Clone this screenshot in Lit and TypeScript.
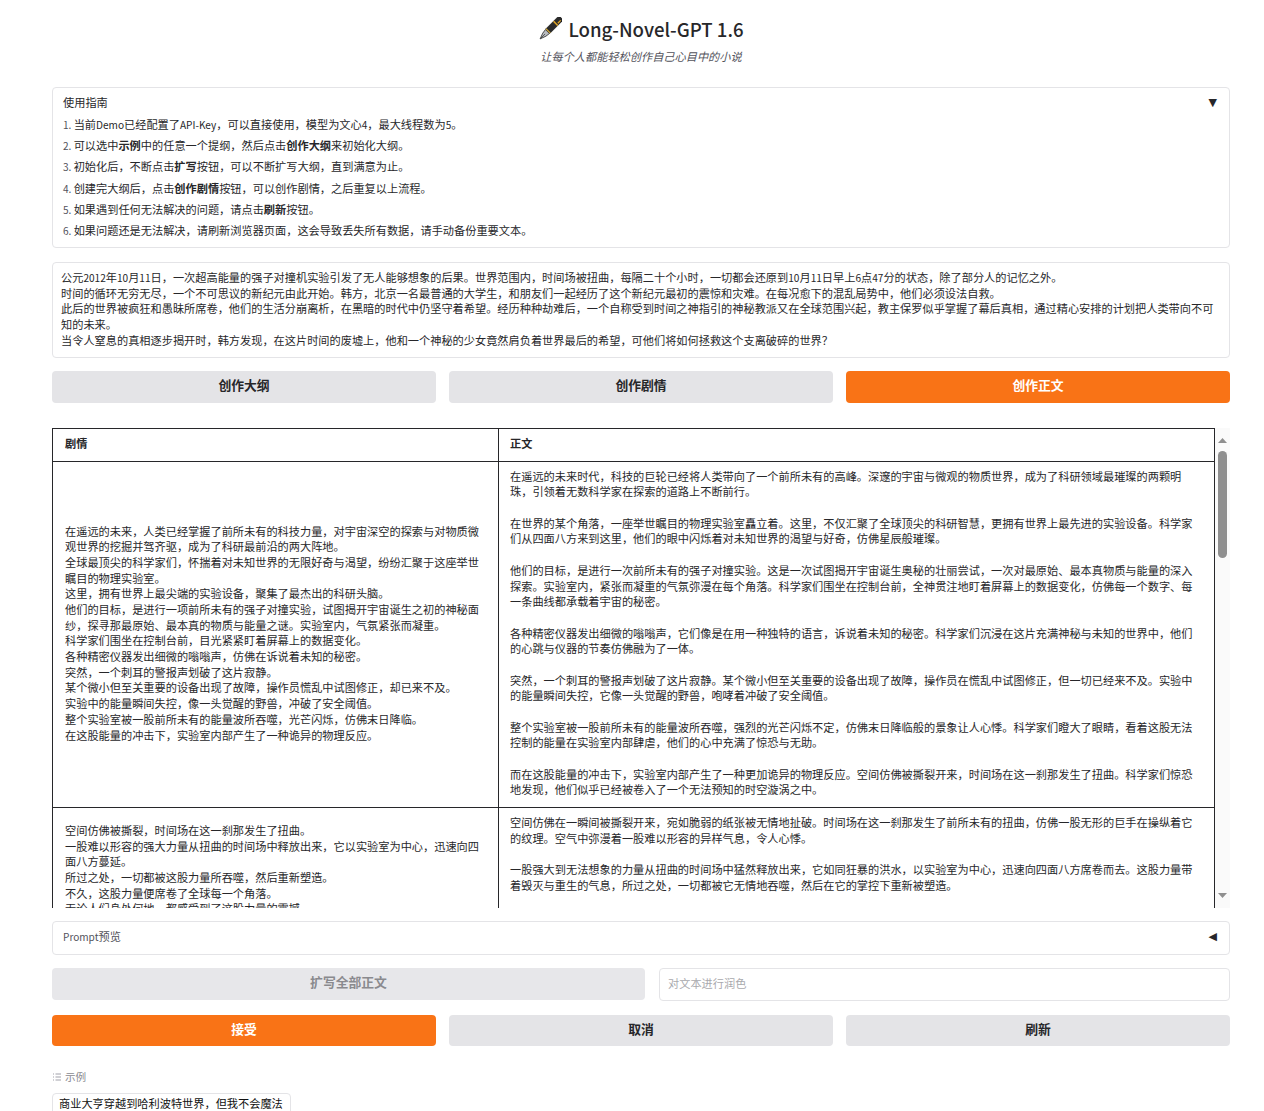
import { LitElement, html, css } from "lit";
import { customElement } from "lit/decorators.js";

/* Latin runs render a little smaller than the CJK around them, as in the reference. */
const lat = (s: string) =>
  s.split(/([A-Za-z0-9-]+)/).map((p, i) => (i % 2 ? html`<span class="lat">${p}</span>` : p));

const GUIDE = [
  html`${lat("当前Demo已经配置了API-Key，可以直接使用，模型为文心4，最大线程数为5。")}`,
  html`可以选中<b>示例</b>中的任意一个提纲，然后点击<b>创作大纲</b>来初始化大纲。`,
  html`初始化后，不断点击<b>扩写</b>按钮，可以不断扩写大纲，直到满意为止。`,
  html`创建完大纲后，点击<b>创作剧情</b>按钮，可以创作剧情，之后重复以上流程。`,
  html`如果遇到任何无法解决的问题，请点击<b>刷新</b>按钮。`,
  html`如果问题还是无法解决，请刷新浏览器页面，这会导致丢失所有数据，请手动备份重要文本。`,
];

const SUMMARY = `公元2012年10月11日，一次超高能量的强子对撞机实验引发了无人能够想象的后果。世界范围内，时间场被扭曲，每隔二十个小时，一切都会还原到10月11日早上6点47分的状态，除了部分人的记忆之外。
时间的循环无穷无尽，一个不可思议的新纪元由此开始。韩方，北京一名最普通的大学生，和朋友们一起经历了这个新纪元最初的震惊和灾难。在每况愈下的混乱局势中，他们必须设法自救。
此后的世界被疯狂和愚昧所席卷，他们的生活分崩离析，在黑暗的时代中仍坚守着希望。经历种种劫难后，一个自称受到时间之神指引的神秘教派又在全球范围兴起，教主保罗似乎掌握了幕后真相，通过精心安排的计划把人类带向不可知的未来。
当令人窒息的真相逐步揭开时，韩方发现，在这片时间的废墟上，他和一个神秘的少女竟然肩负着世界最后的希望，可他们将如何拯救这个支离破碎的世界？`;

const ROWS = [
  {
    plot: `在遥远的未来，人类已经掌握了前所未有的科技力量，对宇宙深空的探索与对物质微观世界的挖掘并驾齐驱，成为了科研最前沿的两大阵地。
全球最顶尖的科学家们，怀揣着对未知世界的无限好奇与渴望，纷纷汇聚于这座举世瞩目的物理实验室。
这里，拥有世界上最尖端的实验设备，聚集了最杰出的科研头脑。
他们的目标，是进行一项前所未有的强子对撞实验，试图揭开宇宙诞生之初的神秘面纱，探寻那最原始、最本真的物质与能量之谜。实验室内，气氛紧张而凝重。
科学家们围坐在控制台前，目光紧紧盯着屏幕上的数据变化。
各种精密仪器发出细微的嗡嗡声，仿佛在诉说着未知的秘密。
突然，一个刺耳的警报声划破了这片寂静。
某个微小但至关重要的设备出现了故障，操作员慌乱中试图修正，却已来不及。
实验中的能量瞬间失控，像一头觉醒的野兽，冲破了安全阈值。
整个实验室被一股前所未有的能量波所吞噬，光芒闪烁，仿佛末日降临。
在这股能量的冲击下，实验室内部产生了一种诡异的物理反应。`,
    text: `在遥远的未来时代，科技的巨轮已经将人类带向了一个前所未有的高峰。深邃的宇宙与微观的物质世界，成为了科研领域最璀璨的两颗明珠，引领着无数科学家在探索的道路上不断前行。

在世界的某个角落，一座举世瞩目的物理实验室矗立着。这里，不仅汇聚了全球顶尖的科研智慧，更拥有世界上最先进的实验设备。科学家们从四面八方来到这里，他们的眼中闪烁着对未知世界的渴望与好奇，仿佛星辰般璀璨。

他们的目标，是进行一次前所未有的强子对撞实验。这是一次试图揭开宇宙诞生奥秘的壮丽尝试，一次对最原始、最本真物质与能量的深入探索。实验室内，紧张而凝重的气氛弥漫在每个角落。科学家们围坐在控制台前，全神贯注地盯着屏幕上的数据变化，仿佛每一个数字、每一条曲线都承载着宇宙的秘密。

各种精密仪器发出细微的嗡嗡声，它们像是在用一种独特的语言，诉说着未知的秘密。科学家们沉浸在这片充满神秘与未知的世界中，他们的心跳与仪器的节奏仿佛融为了一体。

突然，一个刺耳的警报声划破了这片寂静。某个微小但至关重要的设备出现了故障，操作员在慌乱中试图修正，但一切已经来不及。实验中的能量瞬间失控，它像一头觉醒的野兽，咆哮着冲破了安全阈值。

整个实验室被一股前所未有的能量波所吞噬，强烈的光芒闪烁不定，仿佛末日降临般的景象让人心悸。科学家们瞪大了眼睛，看着这股无法控制的能量在实验室内部肆虐，他们的心中充满了惊恐与无助。

而在这股能量的冲击下，实验室内部产生了一种更加诡异的物理反应。空间仿佛被撕裂开来，时间场在这一刹那发生了扭曲。科学家们惊恐地发现，他们似乎已经被卷入了一个无法预知的时空漩涡之中。`,
  },
  {
    plot: `空间仿佛被撕裂，时间场在这一刹那发生了扭曲。
一股难以形容的强大力量从扭曲的时间场中释放出来，它以实验室为中心，迅速向四面八方蔓延。
所过之处，一切都被这股力量所吞噬，然后重新塑造。
不久，这股力量便席卷了全球每一个角落。
无论人们身处何地，都感受到了这股力量的震撼。`,
    text: `空间仿佛在一瞬间被撕裂开来，宛如脆弱的纸张被无情地扯破。时间场在这一刹那发生了前所未有的扭曲，仿佛一股无形的巨手在操纵着它的纹理。空气中弥漫着一股难以形容的异样气息，令人心悸。

一股强大到无法想象的力量从扭曲的时间场中猛然释放出来，它如同狂暴的洪水，以实验室为中心，迅速向四面八方席卷而去。这股力量带着毁灭与重生的气息，所过之处，一切都被它无情地吞噬，然后在它的掌控下重新被塑造。

不久，这股力量便席卷了全球每一个角落。`,
  },
];

@customElement("app-root")
export class AppRoot extends LitElement {
  static styles = css`
    :host {
      display: block;
      height: 1111px;
      overflow: hidden;
      background: #fff;
      font-family: "Noto Sans CJK SC", "Noto Sans", sans-serif;
      font-size: 11.2px;
      line-height: 15.68px;
      color: #27272a;
    }
    .lat {
      font-size: 0.9em;
    }
    .page {
      display: flex;
      flex-direction: column;
      padding: 0 34px 0 52px;
    }
    .head {
      display: flex;
      flex-direction: column;
      align-items: center;
      padding-top: 14px;
      height: 87px;
      box-sizing: border-box;
    }
    .title {
      display: flex;
      align-items: center;
      gap: 6px;
      margin: 0;
      font-size: 18.6px;
      line-height: 30px;
      font-weight: 500;
      color: #27272a;
    }
    .pen {
      width: 24px;
      height: 24px;
      display: block;
    }
    .sub {
      margin-top: 4px;
      font-style: italic;
      color: #52525b;
      line-height: 16px;
    }
    .panel {
      border: 1px solid #e4e4e7;
      border-radius: 4px;
      box-sizing: border-box;
    }
    .guide {
      height: 161px;
      padding: 7px 10px 0;
    }
    .acc-head {
      display: flex;
      justify-content: space-between;
      align-items: center;
      height: 16px;
    }
    .tri {
      font-family: "DejaVu Sans", sans-serif;
      font-size: 11px;
      color: #27272a;
      padding-right: 2px;
    }
    ol {
      margin: 3px 0 0;
      padding: 0;
      list-style: decimal inside;
    }
    li {
      height: 21.2px;
      line-height: 21.2px;
      color: #27272a;
    }
    li::marker {
      color: #52525b;
      font-size: 0.9em;
    }
    b {
      font-weight: 700;
    }
    .summary {
      margin-top: 14px;
      height: 96px;
      padding: 7px 8px;
      white-space: pre-wrap;
    }
    .btns {
      display: grid;
      grid-template-columns: repeat(3, 1fr);
      gap: 13px;
    }
    .btns.top {
      margin-top: 13px;
    }
    .btn {
      height: 32px;
      border: none;
      border-radius: 4px;
      background: #e4e4e7;
      color: #27272a;
      font: 700 12.8px/16px "Noto Sans CJK SC", sans-serif;
      padding: 0 0 4px;
    }
    .btn.primary {
      background: #f97316;
      color: #fff;
    }
    .grid-wrap {
      margin-top: 25px;
      height: 480px;
      display: flex;
      overflow: hidden;
    }
    table {
      width: 1163px;
      flex: none;
      align-self: flex-start;
      table-layout: fixed;
      border-collapse: collapse;
    }
    th,
    td {
      border: 1px solid #27272a;
      padding: 7px 11px 9px;
      box-sizing: border-box;
      white-space: pre-wrap;
      text-align: left;
      vertical-align: middle;
    }
    th:first-child,
    td:first-child {
      padding-left: 12px;
    }
    th {
      font-weight: 700;
    }
    .col1 {
      width: 446px;
    }
    .bar {
      flex: none;
      width: 15px;
      height: 480px;
      background: #fafafa;
      position: relative;
    }
    .up,
    .down {
      position: absolute;
      left: 3px;
      width: 9px;
      height: 5px;
      background: #8f8f8f;
    }
    .up {
      top: 10px;
      clip-path: polygon(50% 0, 100% 100%, 0 100%);
    }
    .down {
      top: 465px;
      clip-path: polygon(0 0, 100% 0, 50% 100%);
    }
    .thumb {
      position: absolute;
      left: 3px;
      top: 23px;
      width: 9px;
      height: 107px;
      border-radius: 5px;
      background: #8f8f8f;
    }
    .prompt {
      margin-top: 13px;
      height: 34px;
      padding: 0 10px 2px;
      display: flex;
      justify-content: space-between;
      align-items: center;
      color: #52525b;
    }
    .edit {
      margin-top: 13px;
      display: grid;
      grid-template-columns: 593px 571px;
      gap: 14px;
      align-items: start;
    }
    .btn.off {
      height: 32px;
      color: #8a8a8e;
      background: #e7e7ea;
    }
    .input {
      height: 33px;
      box-sizing: border-box;
      padding: 0 8px 2px;
      display: flex;
      align-items: center;
      color: #a9a9ad;
    }
    .btns.bottom {
      margin-top: 14px;
    }
    .btns.bottom .btn {
      height: 31px;
    }
    .ex-label {
      margin-top: 23px;
      display: flex;
      align-items: center;
      gap: 4px;
      color: #8a8a90;
      height: 16px;
      font-size: 10.6px;
    }
    .ex-icon {
      width: 8px;
      height: 8px;
      margin-left: 1px;
    }
    .ex-chip {
      margin-top: 8px;
      width: 239px;
      height: 28px;
      box-sizing: border-box;
      border: 1px solid #e4e4e7;
      border-radius: 4px;
      padding: 2px 6px;
      color: #111;
      white-space: nowrap;
    }
  `;

  render() {
    return html`
      <div class="page">
        <div class="head">
          <h1 class="title">
            <svg class="pen" viewBox="0 0 24 24" aria-hidden="true">
              <g transform="rotate(45 12 12)">
                <path d="M9 -3 Q12 -4.6 15 -3 L15 15 L9 15 Z" fill="#2a2a2a" stroke="#111" stroke-width=".6" />
                <rect x="9" y="3.2" width="6" height="1.6" fill="#e0a526" />
                <rect x="12.8" y="-1.6" width="1.3" height="4" fill="#e0a526" />
                <rect x="9" y="14" width="6" height="1.6" fill="#c9a035" />
                <path d="M9.2 15.6 L14.8 15.6 L14.2 20 L12 26 L9.8 20 Z" fill="#b9bcc0" stroke="#333" stroke-width=".8" />
                <path d="M12 19 V25" stroke="#333" stroke-width=".7" />
              </g>
            </svg>
            Long-Novel-GPT 1.6
          </h1>
          <div class="sub">让每个人都能轻松创作自己心目中的小说</div>
        </div>

        <section class="panel guide">
          <div class="acc-head"><span>使用指南</span><span class="tri">▼</span></div>
          <ol>${GUIDE.map((g) => html`<li>${g}</li>`)}</ol>
        </section>

        <section class="panel summary">${lat(SUMMARY)}</section>

        <div class="btns top">
          <button class="btn">创作大纲</button>
          <button class="btn">创作剧情</button>
          <button class="btn primary">创作正文</button>
        </div>

        <div class="grid-wrap">
          <table>
            <colgroup><col class="col1" /><col /></colgroup>
            <thead>
              <tr><th>剧情</th><th>正文</th></tr>
            </thead>
            <tbody>
              ${ROWS.map((r) => html`<tr><td>${r.plot}</td><td>${r.text}</td></tr>`)}
            </tbody>
          </table>
          <div class="bar">
            <div class="up"></div>
            <div class="thumb"></div>
            <div class="down"></div>
          </div>
        </div>

        <section class="panel prompt"><span><span class="lat">Prompt</span>预览</span><span class="tri">◀</span></section>

        <div class="edit">
          <button class="btn off" disabled>扩写全部正文</button>
          <div class="panel input">对文本进行润色</div>
        </div>

        <div class="btns bottom">
          <button class="btn primary">接受</button>
          <button class="btn">取消</button>
          <button class="btn">刷新</button>
        </div>

        <div class="ex-label">
          <svg class="ex-icon" viewBox="0 0 8 8" aria-hidden="true">
            <path d="M0 1H1M2.5 1H8M0 4H1M2.5 4H8M0 7H1M2.5 7H8" stroke="#a1a1aa" stroke-width="1" fill="none" />
          </svg>
          <span>示例</span>
        </div>
        <div class="ex-chip">商业大亨穿越到哈利波特世界，但我不会魔法</div>
      </div>
    `;
  }
}
